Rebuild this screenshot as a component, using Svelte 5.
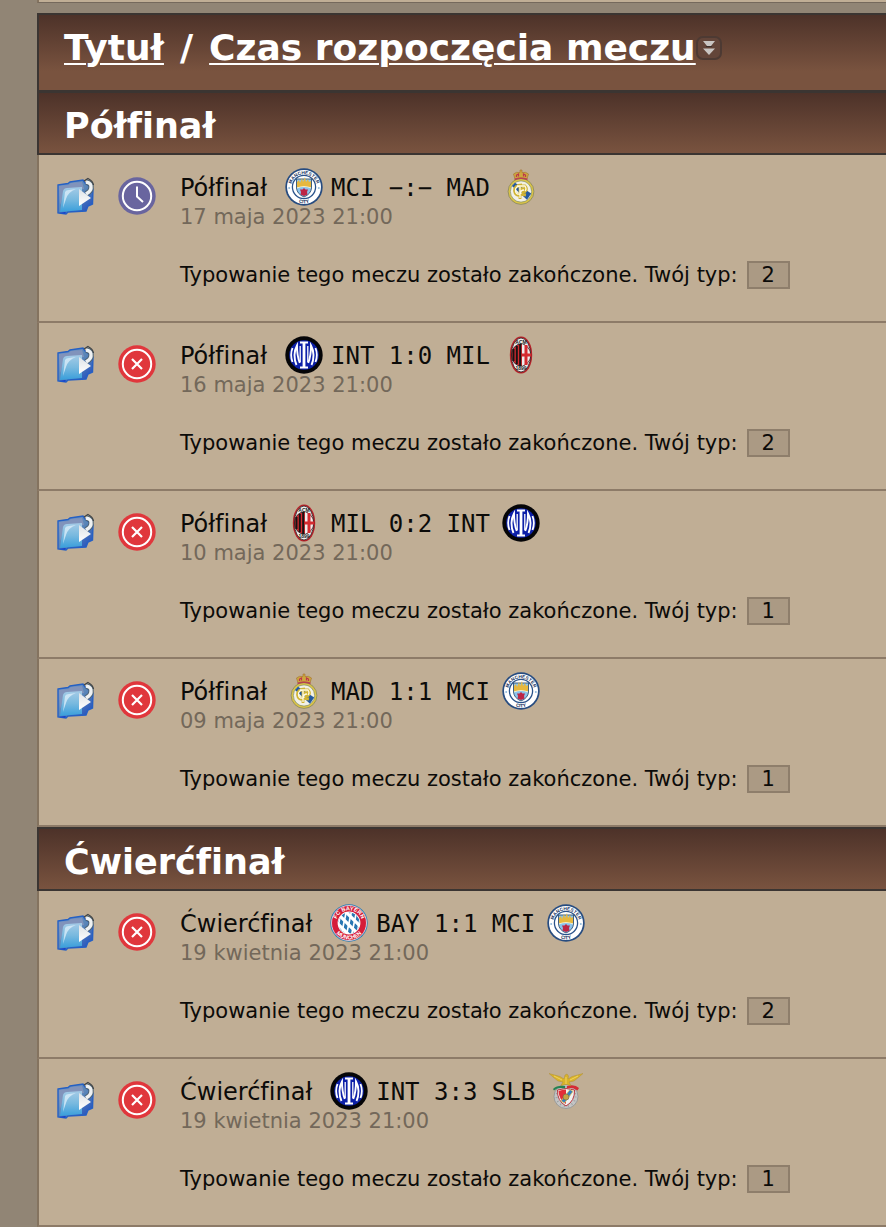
<script>
  const prompt = 'Typowanie tego meczu zostało zakończone. Twój typ:'

  const rounds = [
    {
      name: 'Półfinał',
      matches: [
        { home: 'MCI', away: 'MAD', score: '−:−', date: '17 maja 2023 21:00', pick: 2, status: 'pending' },
        { home: 'INT', away: 'MIL', score: '1:0', date: '16 maja 2023 21:00', pick: 2, status: 'missed' },
        { home: 'MIL', away: 'INT', score: '0:2', date: '10 maja 2023 21:00', pick: 1, status: 'missed' },
        { home: 'MAD', away: 'MCI', score: '1:1', date: '09 maja 2023 21:00', pick: 1, status: 'missed' },
      ]
    },
    {
      name: 'Ćwierćfinał',
      matches: [
        { home: 'BAY', away: 'MCI', score: '1:1', date: '19 kwietnia 2023 21:00', pick: 2, status: 'missed' },
        { home: 'INT', away: 'SLB', score: '3:3', date: '19 kwietnia 2023 21:00', pick: 1, status: 'missed' },
      ]
    },
  ]
</script>

{#snippet folder()}
  <svg class="icon" viewBox="0 0 38 38" aria-hidden="true">
    <path d="M1 8 L11 6.5 L13 5 L26 3 L28 6 L36 12 L35.5 27 L31 29 L29 34 L11 35 L9 37 L1 36Z" fill="url(#folder-back)" stroke="#2560c4" stroke-width="1.4" />
    <path d="M2 9 L12 8 L14 6 L25 5 L27 12 L8 13 L3 28Z" fill="#8193bb" />
    <path d="M6 14 Q7 11 10 11 L25 10 L25 33 L3 35Z" fill="url(#folder-front)" />
    <path d="M8 15 Q9 13 12 13 L19 12 Q11 15 9 22 L6 31Z" fill="#e4f2fc" opacity="0.7" />
    <path d="M1.5 36 L9 35 L8 36.5Z" fill="#0b35d2" />
    <path d="M29 5 Q35 6 34 11 Q34 14 29 17" fill="none" stroke="#4f6473" stroke-width="5.5" />
    <path d="M29 5 Q35 6 34 11 Q34 14 29 17" fill="none" stroke="#eef1f3" stroke-width="3.5" />
    <path d="M22 12 L34 21 L22 29Z" fill="url(#silver)" />
    <path d="M27 4 L31 1.5 Q36 4 36.5 8" fill="none" stroke="#3d4245" stroke-width="1.2" />
  </svg>
{/snippet}

{#snippet statusIcon(status)}
  <svg class="icon" viewBox="0 0 38 38" aria-hidden="true">
    <circle cx="19" cy="19" r="18.7" fill={status === 'pending' ? '#69659f' : '#e0373c'} />
    <circle cx="19" cy="19" r="14.2" fill="none" stroke="#fff" stroke-width="2" />
    {#if status === 'pending'}
      <path d="M19 9.5 V19.5 L25 25" fill="none" stroke="#fff" stroke-width="2" />
    {:else}
      <path d="M14 14 L24 24 M24 14 L14 24" stroke="#fff" stroke-width="2.2" />
    {/if}
  </svg>
{/snippet}

{#snippet crest(team)}
  <svg class="icon" viewBox="0 0 38 38" aria-hidden="true">
    {#if team === 'MCI'}
      <circle cx="19" cy="19" r="18.7" fill="#274c80" />
      <circle cx="19" cy="19" r="17" fill="#fff" />
      <circle cx="19" cy="19" r="11.6" fill="#fff" stroke="#29528a" stroke-width="1.3" />
      <text class="ring-text" font-size="4.8" fill="#152f5b"><textPath href="#arc-top" startOffset="50%">MANCHESTER</textPath></text>
      <text class="ring-text" font-size="4.8" fill="#152f5b"><textPath href="#arc-bottom" startOffset="50%">CITY</textPath></text>
      <path d="M11.5 11 H26.5 V20 Q26 26 19 29 Q12 26 11.5 20Z" fill="#8bc4ed" stroke="#315173" stroke-width="0.9" />
      <path d="M12 19 V14 L14 12 L15 15 L17 10 L18 14 L20 9 L21 14 L23 11 L24 14 L26 13 V19Z" fill="#e7b83e" />
      <path d="M12 20 Q19 17 26 20" fill="none" stroke="#f6eecb" stroke-width="1.2" />
      <path d="M19 20 L20.5 21.5 L23 21.5 L22 24 L22.5 26.5 L19 28 L15.5 26.5 L16 24 L15 21.5 L17.5 21.5Z" fill="#bd2445" />
      <circle cx="4.2" cy="20" r="1" fill="#91badb" />
      <circle cx="33.8" cy="20" r="1" fill="#91badb" />
    {:else if team === 'INT'}
      <circle cx="19" cy="19" r="18.7" fill="#050507" />
      <circle cx="19" cy="19" r="14.8" fill="#0d20a8" />
      <g fill="none" stroke="#fff">
        <path d="M15 6.5 H23 M15 31.5 H23" stroke-width="1.8" />
        <path d="M19 7 V31" stroke-width="2.8" />
        <path d="M14.8 27 Q12 20 12 9.5 Q9.5 14 9.5 19 Q9.5 25 11.5 29" stroke-width="1.9" />
        <path d="M23.2 27 Q26 20 26 9.5 Q28.5 14 28.5 19 Q28.5 25 26.5 29" stroke-width="1.9" />
        <path d="M15.2 10 V26 M22.8 10 V26" stroke-width="1.3" />
        <path d="M7.5 12 Q4.8 19 7.5 26 M30.5 12 Q33.2 19 30.5 26" stroke-width="1.8" />
      </g>
    {:else if team === 'MIL'}
      <ellipse cx="19" cy="19" rx="11.2" ry="18.6" fill="#b52028" />
      <ellipse cx="19" cy="19" rx="9.6" ry="17" fill="#eee" stroke="#292323" stroke-width="0.8" />
      <ellipse cx="19" cy="19" rx="9.6" ry="11" fill="#d42a30" stroke="#222" stroke-width="0.8" />
      <path d="M11.5 13 V25 M14.8 10 V28 M18.2 8 V30" stroke="#161313" stroke-width="2" />
      <path d="M20 8 Q28 11 28.4 19 Q28 27 20 30Z" fill="#eee" />
      <path d="M24 9 V29 M20 19 H29" stroke="#d52b30" stroke-width="3" />
      <text x="19" y="7.5" class="ring-text" font-size="5" fill="#222">ACM</text>
      <text x="19" y="34" class="ring-text" font-size="5" fill="#222">1899</text>
    {:else if team === 'MAD'}
      <circle cx="19" cy="23.5" r="12.9" fill="#dbc446" stroke="#7c8060" stroke-width="0.7" />
      <circle cx="19" cy="23.5" r="10.6" fill="#f1f0e6" stroke="#71836b" stroke-width="0.6" />
      <path d="M10 18 L13 14.8 L29.2 25.5 L25 31.8Z" fill="#23599f" />
      <path d="M15 18 H23 Q26 21 23 23.5 H20 M20 17 Q12 17 12.5 23 Q13 28 19 27 M18 18 V31 M23 21 Q17 21 18 26 L24 27" fill="none" stroke="#d0b433" stroke-width="2.8" />
      <path d="M15 18 H23 Q25 21 23 23 M19 18 Q13 18 13.5 23 Q14 27 18 26 M18 19 V30 M22 22 Q18 22 19 26" fill="none" stroke="#fffbe4" stroke-width="1.3" />
      <path d="M13 11 L11.5 6 Q14 3.5 18 4.5 V2 H20 V4.5 Q24 3.5 26.5 6 L25 11 Q19 9 13 11Z" fill="#cda73e" stroke="#a3712f" stroke-width="0.6" />
      <path d="M14.5 9 V7 L16.5 6 V8.5 M21.5 8.5 V6 L23.5 7 V9" fill="none" stroke="#bd354c" stroke-width="1.2" />
      <path d="M12.5 11.5 Q19 9 25.5 11.5" fill="none" stroke="#b84251" stroke-width="1.4" />
    {:else if team === 'BAY'}
      <circle cx="19" cy="19" r="18.7" fill="#277bb5" />
      <circle cx="19" cy="19" r="17.5" fill="#d51d38" stroke="#fff" stroke-width="0.7" />
      <circle cx="19" cy="19" r="11.4" fill="#fff" />
      <g clip-path="url(#bay-inner)">
        <path d="M5 12 L30 37 M5 2 L35 32 M0 17 L20 37 M13 0 L38 25 M-5 22 L10 37" stroke="#2876b2" stroke-width="3.8" />
        <path d="M9 4 V34 M14 4 V34 M19 4 V34 M24 4 V34 M29 4 V34" stroke="#fff" stroke-width="1.7" transform="rotate(12 19 19)" />
      </g>
      <text class="ring-text" font-size="5.6" fill="#fff"><textPath href="#arc-top" startOffset="50%">FC BAYERN</textPath></text>
      <text class="ring-text" font-size="5.6" fill="#fff"><textPath href="#arc-bottom" startOffset="50%">MÜNCHEN</textPath></text>
    {:else}
      <circle cx="19" cy="24.5" r="12" fill="#c4c5c5" stroke="#8f9292" stroke-width="0.8" />
      <circle cx="19" cy="24.5" r="9.5" fill="none" stroke="#9ca0a1" stroke-width="2" stroke-dasharray="1 3" />
      <path d="M10.5 18 Q19 15 27.5 18 Q28 29 19 34 Q10 29 10.5 18Z" fill="#f1f1f0" stroke="#b73840" stroke-width="1" />
      <path d="M11.5 19 Q15 17.5 19 17.5 V32 Q12 28 11.5 19Z" fill="#e32e37" />
      <path d="M14 29 L23 17.5 L26 19.5 L17.5 31Z" fill="#377fbd" stroke="#e3c75a" stroke-width="0.8" />
      <circle cx="19" cy="25" r="3" fill="#c6a544" stroke="#6d6a51" stroke-width="0.6" />
      <path d="M6 17 Q10 13 18 14 V16.5 Q11 15 7 18.5Z" fill="#258253" />
      <path d="M20 14 Q28 12 32 16 L30.5 18.5 Q25 15 20 16.5Z" fill="#d52c35" />
      <path d="M2 1.5 L13 4.5 L17 7 L18 3 L20 2 L21.5 4 L21 7 L25 4.5 L36 1.5 L32 5 L27 9 L22 10 L24 13.5 L19 12.5 L14 13.5 L16 10 L11 9 L6 5Z" fill="#d9b32b" stroke="#a8892b" stroke-width="0.4" />
      <path d="M7 4 L15 8 M31 4 L23 8 M19 5 V12" stroke="#f0d45f" stroke-width="1" />
    {/if}
  </svg>
{/snippet}

<!-- gradients and paths shared by the icons -->
<svg class="defs" aria-hidden="true">
  <defs>
    <linearGradient id="folder-back" x1="0" y1="0" x2="1" y2="1">
      <stop offset="0" stop-color="#7397c8" />
      <stop offset="0.5" stop-color="#5a86b8" />
      <stop offset="1" stop-color="#1745c0" />
    </linearGradient>
    <linearGradient id="folder-front" x1="0" y1="0" x2="0" y2="1">
      <stop offset="0" stop-color="#a5cbe6" />
      <stop offset="0.5" stop-color="#78b9df" />
      <stop offset="1" stop-color="#389edb" />
    </linearGradient>
    <linearGradient id="silver" x1="0" y1="0" x2="0" y2="1">
      <stop offset="0" stop-color="#dfe3e6" />
      <stop offset="1" stop-color="#ffffff" />
    </linearGradient>
    <clipPath id="bay-inner"><circle cx="19" cy="19" r="10.6" /></clipPath>
    <path id="arc-top" d="M7 25 A13.2 13.2 0 1 1 31 25" />
    <path id="arc-bottom" d="M2.6 19 A16.4 16.4 0 0 0 35.4 19" />
  </defs>
</svg>

<div class="page">
  <div class="previous"></div>
  <table class="matches">
    <thead>
      <tr>
        <th class="sort" colspan="3">
          <div class="sort-line">
            <a href="#title">Tytuł</a>
            <span class="slash">/</span>
            <a href="#start">Czas rozpoczęcia meczu</a>
            <svg class="sort-icon" viewBox="0 0 26 24" aria-hidden="true">
              <rect x="1" y="1" width="24" height="22" rx="6" fill="#634539" stroke="#4d3a33" stroke-width="2" />
              <path d="M7 5 H19 L15 10 H11Z M7 12.5 H19 L13 19Z" fill="#c9c5c2" />
              <path d="M10 10.5 H16" stroke="#3b302c" stroke-width="1" />
            </svg>
          </div>
        </th>
      </tr>
    </thead>
    {#each rounds as round (round.name)}
      <tbody>
        <tr>
          <th class="round" colspan="3">{round.name}</th>
        </tr>
        {#each round.matches as match}
          <tr>
            <td class="icon-cell folder-cell">{@render folder()}</td>
            <td class="icon-cell">{@render statusIcon(match.status)}</td>
            <td class="details">
              <div class="fixture">
                <span class="stage">{round.name}</span>
                {@render crest(match.home)}
                <span class="score">{match.home} {match.score} {match.away}</span>
                {@render crest(match.away)}
              </div>
              <div class="date">{match.date}</div>
              <div class="tip">{prompt}<span class="pick">{match.pick}</span></div>
            </td>
          </tr>
        {/each}
      </tbody>
    {/each}
  </table>
</div>

<style>
  :global(body) {
    background: #918575;
    color: #0c0b09;
    font-family: Verdana, "DejaVu Sans", sans-serif;
    font-variant-ligatures: none;
  }
  .defs {
    position: absolute;
    width: 0;
    height: 0;
  }
  .page {
    padding-left: 37px;
    overflow: hidden;
  }
  .previous {
    height: 2px;
    margin-bottom: 10px;
    background: #c0ae95;
    border-left: 2px solid #84735f;
    border-bottom: 1px solid #75695c;
  }
  .matches {
    width: 100%;
    border-collapse: separate;
    border-spacing: 0;
  }
  th {
    box-sizing: border-box;
    padding: 0 25px;
    background: linear-gradient(#4d3229, #79533f);
    border: 2px solid #3b3532;
    border-right: 0;
    color: #fff;
    font-size: 35px;
    line-height: 44px;
    font-weight: bold;
    text-align: left;
    white-space: nowrap;
  }
  .sort {
    height: 78px;
    padding-bottom: 10px;
    border-bottom-width: 1px;
    background: linear-gradient(#4d3229, #79533f 75%);
    font-size: 36px;
  }
  .sort-line {
    display: flex;
    align-items: center;
  }
  .slash {
    margin: 0 16px;
  }
  .sort-icon {
    width: 26px;
    height: 24px;
  }
  a {
    color: #fff;
    text-decoration-thickness: 2px;
    text-underline-offset: 3px;
  }
  .round {
    height: 64px;
    padding-top: 6px;
  }
  td {
    background: #c0ae95;
    border-bottom: 2px solid #8d7b68;
    padding: 0;
    vertical-align: top;
  }
  .icon-cell {
    width: 61px;
    padding-top: 22px;
  }
  .folder-cell {
    border-left: 2px solid #84735f;
    padding-left: 18px;
  }
  .icon {
    display: block;
    flex: none;
    width: 38px;
    height: 38px;
  }
  .ring-text {
    font-family: "Liberation Sans", Arial, sans-serif;
    font-weight: bold;
    text-anchor: middle;
  }
  .details {
    padding: 13px 0 32px 1px;
  }
  .fixture {
    display: flex;
    align-items: center;
    gap: 8px;
    height: 38px;
    font-size: 24px;
    line-height: 30px;
    white-space: nowrap;
  }
  .stage {
    margin-right: 10px;
    padding-top: 2px;
  }
  .score {
    margin-right: 4px;
    padding-top: 2px;
    font-family: "DejaVu Sans Mono", monospace;
  }
  .date {
    color: #73685a;
    font-size: 21px;
    line-height: 22px;
  }
  .tip {
    display: flex;
    align-items: center;
    margin-top: 33px;
    font-size: 21px;
    line-height: 24px;
    white-space: nowrap;
  }
  .pick {
    box-sizing: border-box;
    width: 43px;
    margin-left: 9px;
    border: 2px solid #8e7e6b;
    background: #ab9a84;
    text-align: center;
  }
</style>
